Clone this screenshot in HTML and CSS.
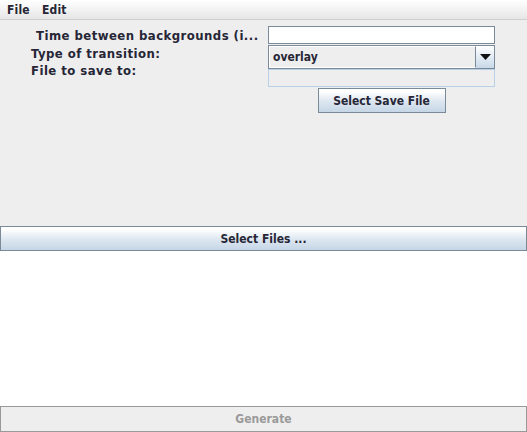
FILE: index.html
```html
<!DOCTYPE html>
<html lang="en">
<head>
    <meta charset="UTF-8">
    <title>Background Slideshow</title>
    <link rel="stylesheet" href="styles.css">
</head>
<body>
    <div class="menubar">
        <span class="menu">File</span>
        <span class="menu">Edit</span>
    </div>

    <div class="options">
        <div class="labels">
            <label class="label label-time">Time between backgrounds (i...</label>
            <label class="label">Type of transition:</label>
            <label class="label">File to save to:</label>
        </div>

        <div class="fields">
            <input type="text" class="field">
            <div class="combo">
                <span class="combo-value">overlay</span>
                <span class="combo-arrow">
                    <svg width="11" height="6" viewBox="0 0 11 6"><path d="M0 0h11L5.5 6z" fill="#111"/></svg>
                </span>
            </div>
            <div class="field field-off"></div>
            <button class="btn btn-save">Select Save File</button>
        </div>
    </div>

    <button class="btn btn-wide">Select Files ...</button>

    <div class="file-list"></div>

    <button class="btn-disabled" disabled>Generate</button>
</body>
</html>
```

FILE: styles.css
```css
* { margin: 0; padding: 0; box-sizing: border-box; font-family: 'DejaVu Sans Condensed', 'DejaVu Sans', sans-serif; }
body {
    width: 527px;
    height: 432px;
    background: #eeeeee;
    display: flex;
    flex-direction: column;
    color: #262636;
    font-size: 12px;
    font-weight: bold;
}

.menubar {
    height: 20px;
    background: linear-gradient(#ffffff, #e6e6e6);
    border-bottom: 1px solid #cfcfcf;
    display: flex;
    gap: 12px;
    padding: 3px 0 0 7px;
}
.menu { font-size: 12px; letter-spacing: 0.2px; }

.options {
    height: 206px;
    padding-top: 6px;
    display: flex;
}

.labels {
    width: 268px;
    padding-top: 1px;
    display: flex;
    flex-direction: column;
}
.label {
    height: 18px;
    line-height: 17px;
    font-size: 13px;
    letter-spacing: 0.45px;
    padding-left: 31px;
    white-space: nowrap;
    overflow: hidden;
}
.label-time { padding-left: 36px; }
.label:last-child { margin-top: -1px; }

.fields {
    width: 227px;
    display: flex;
    flex-direction: column;
    align-items: center;
}

.field {
    width: 100%;
    height: 18px;
    border: 1px solid #7a8a99;
    background: #ffffff;
}
.field-off {
    border-color: #b8cfe5;
    background: #eeeeee;
}

.combo {
    width: 100%;
    height: 24px;
    margin-top: 1px;
    display: flex;
    border: 1px solid #7a8a99;
    background: #eeeeee;
}
.combo-value {
    flex: 1;
    padding: 3px 0 0 3px;
    border: 1px solid #ffffff;
    border-right: 1px solid #7a8a99;
    font-size: 12px;
}
.combo-arrow {
    width: 18px;
    display: flex;
    align-items: center;
    justify-content: center;
    background: linear-gradient(#ffffff, #c8d8e8);
}

.btn {
    border: 1px solid #7a8a99;
    background: linear-gradient(#ffffff 10%, #dce6f0 55%, #c6d6e6);
    color: #262636;
    font-size: 12px;
    font-weight: bold;
}
.btn-save {
    width: 128px;
    height: 25px;
    margin-top: 1px;
}
.btn-wide {
    width: 527px;
    height: 25px;
}

.file-list {
    height: 155px;
    background: #ffffff;
}

.btn-disabled {
    height: 26px;
    width: 527px;
    border: 1px solid #999999;
    background: #eeeeee;
    color: #9a9a9a;
    font-size: 12px;
    font-weight: bold;
}
```
